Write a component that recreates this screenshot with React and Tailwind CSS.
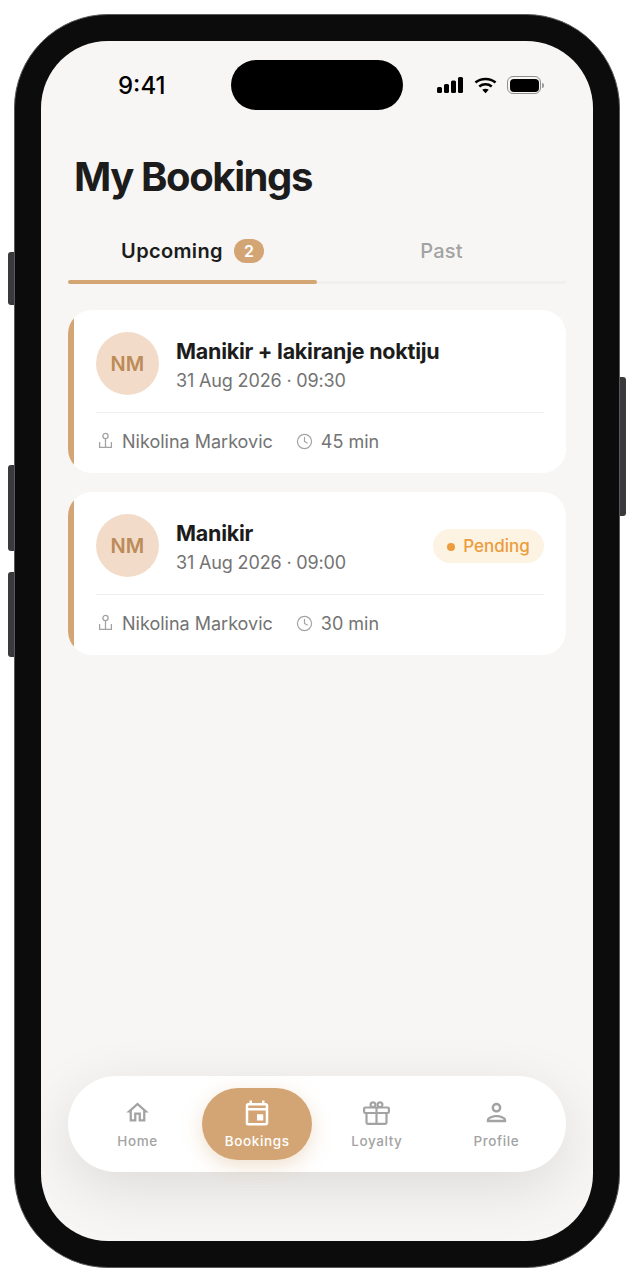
import React from "react";
import { MdOutlineEvent, MdOutlineHome, MdOutlinePerson } from "react-icons/md";
import { Clock } from "lucide-react";

const bookings = [
  { id: 1, title: "Manikir + lakiranje noktiju", when: "31 Aug 2026 · 09:30", length: "45 min" },
  { id: 2, title: "Manikir", when: "31 Aug 2026 · 09:00", length: "30 min", pending: true },
];

const GiftIcon = () => (
  <svg viewBox="0 0 27 24" className="h-[24px] w-[27px]" fill="none" stroke="currentColor" strokeWidth="2.2">
    <rect x="1.100" y="6.500" width="24.800" height="5.500" rx="1.200" />
    <path d="M3.500 12v9.600a1.300 1.300 0 0 0 1.300 1.300h17.400a1.300 1.300 0 0 0 1.300-1.300V12" />
    <path d="M13.500 6.500v16.400" />
    <circle cx="10" cy="3.800" r="2.400" />
    <circle cx="17" cy="3.800" r="2.400" />
  </svg>
);

const StaffIcon = () => (
  <svg viewBox="0 0 18 18" className="h-[18px] w-[18px] text-[#a3a3a3]" fill="none" stroke="currentColor" strokeWidth="1.3">
    <circle cx="9.500" cy="4" r="2.600" />
    <path d="M9.500 6.600v8.900M3.600 10v5.400h11.800V10" />
  </svg>
);

const StatusIcons = () => (
  <div className="flex items-center gap-[10px]">
    <svg viewBox="0 0 27 16" className="h-[16px] w-[27px]" fill="#000">
      <rect x="0" y="10" width="5" height="6" rx="1.500" />
      <rect x="7" y="7" width="5" height="9" rx="1.500" />
      <rect x="14" y="3.500" width="5" height="12.500" rx="1.500" />
      <rect x="21" y="0" width="5" height="16" rx="1.500" />
    </svg>
    <svg viewBox="0 0 24 18" className="h-[18px] w-[23px]" fill="none" stroke="#000" strokeWidth="2.700">
      <path d="M1.500 6.500c6-5 15-5 21 0" />
      <path d="M5.500 10.500c3.800-3 9.200-3 13 0" />
      <path d="M12 17.500l-3.400-3.600c2-1.400 4.800-1.400 6.800 0z" fill="#000" stroke="none" />
    </svg>
    <div className="relative flex h-[18px] w-[34px] items-center justify-center rounded-[6px] border border-[#8f8f8f] p-[1.500px]">
      <div className="h-full w-full rounded-[4px] bg-black" />
      <div className="absolute right-[-4px] h-[5px] w-[2px] rounded-r-sm bg-[#9a9a9a]" />
    </div>
  </div>
);

const BookingCard = ({ title, when, length, pending }) => (
  <div className="flex h-[163px] overflow-hidden rounded-[24px] bg-white">
    <div className="w-[6px] shrink-0 bg-[#d4a574]" />
    <div className="min-w-0 flex-1 px-[22px] pt-[22px]">
      <div className="flex h-[63px] items-center">
        <div className="flex h-[63px] w-[63px] shrink-0 items-center justify-center rounded-full bg-[#f2dcc9] text-[20px] font-semibold tracking-[0.3px] text-[#bc8b58]">
          NM
        </div>
        <div className="ml-[17px] min-w-0 flex-1 pt-[2px]">
          <div className="text-[21.500px] leading-[30px] font-bold tracking-[-0.25px] text-[#1c1c1c]">{title}</div>
          <div className="mt-[2px] text-[18px] leading-[25px] tracking-[-0.15px] text-[#737373]">{when}</div>
        </div>
        {pending && (
          <div className="mt-[1px] flex h-[34px] w-[111px] items-center justify-center gap-[8px] rounded-full bg-[#fdf3e3] pt-[1px] text-[17px] font-medium text-[#ec9c3c]">
            <span className="h-[8px] w-[8px] rounded-full bg-[#ec9c3c]" />
            Pending
          </div>
        )}
      </div>
      <div className="mt-[17px] h-[1px] bg-[#efeeec]" />
      <div className="mt-[16px] flex h-[24px] items-center text-[18px] text-[#737373]">
        <StaffIcon />
        <span className="ml-[8px]">Nikolina Markovic</span>
        <Clock size={17} strokeWidth={1.700} className="ml-[23px] text-[#a3a3a3]" />
        <span className="ml-[8px]">{length}</span>
      </div>
    </div>
  </div>
);

const NavItem = ({ icon, label, active }) => (
  <div
    className={
      "flex h-[72px] flex-col items-center justify-center rounded-[36px] " +
      (active ? "bg-[#d4a574] text-white shadow-[0_6px_20px_rgba(212,165,116,0.35)]" : "text-[#a3a3a3]")
    }
  >
    <div className="flex h-[28px] items-center">{icon}</div>
    <span className="mt-[5px] text-[13.500px] leading-[18px] font-medium tracking-[0.6px]">{label}</span>
  </div>
);

export default function App() {
  return (
    <div className="flex h-[1282px] w-[634px] items-center justify-center bg-white font-['Inter',sans-serif]">
      <div className="relative h-[1254px] w-[606px] rounded-[94px] border border-[#5a5a5e] bg-[#0c0c0c]">
        {/* side buttons */}
        <div className="absolute left-[-7px] top-[237px] h-[53px] w-[6px] rounded-l-[3px] bg-[#3a3a3c]" />
        <div className="absolute left-[-7px] top-[450px] h-[86px] w-[6px] rounded-l-[3px] bg-[#3a3a3c]" />
        <div className="absolute left-[-7px] top-[557px] h-[85px] w-[6px] rounded-l-[3px] bg-[#3a3a3c]" />
        <div className="absolute right-[-7px] top-[362px] h-[139px] w-[6px] rounded-r-[3px] bg-[#3a3a3c]" />

        <div className="absolute inset-[26px] flex flex-col overflow-hidden rounded-[67px] bg-[#f7f6f4] px-[27px]">
          <div className="absolute left-[190px] top-[19px] h-[50px] w-[172px] rounded-full bg-black" />

          {/* status bar */}
          <div className="flex h-[90px] items-start justify-between pl-[50px] pr-[25px] pt-[28px]">
            <span className="text-[24px] leading-[34px] font-medium text-black">9:41</span>
            <div className="pt-[7px]">
              <StatusIcons />
            </div>
          </div>

          <h1 className="ml-[6px] mt-[22px] text-[40px] leading-[48px] font-bold tracking-[-1.4px] text-[#1c1c1c]">
            My Bookings
          </h1>

          {/* tabs */}
          <div className="mt-[33px] grid grid-cols-2 border-b-[3px] border-[#f1f0ee]">
            <div className="relative flex h-[47px] items-center justify-center gap-[11px] pb-[14px]">
              <span className="text-[20px] font-semibold tracking-[0.35px] text-[#1c1c1c]">Upcoming</span>
              <span className="flex h-[24px] w-[30px] items-center justify-center rounded-full bg-[#d4a574] text-[16px] font-semibold text-white">
                2
              </span>
              <div className="absolute bottom-[-3px] left-0 right-0 h-[4px] rounded-full bg-[#d4a574]" />
            </div>
            <div className="flex h-[47px] items-center justify-center pb-[14px] text-[20px] font-medium tracking-[0.2px] text-[#a3a3a3]">
              Past
            </div>
          </div>

          <div className="mt-[26px] flex flex-col gap-[19px]">
            {bookings.map((b) => (
              <BookingCard key={b.id} {...b} />
            ))}
          </div>

          {/* bottom navigation */}
          <div className="mb-[69px] mt-auto grid h-[96px] grid-cols-4 items-center gap-[9.500px] rounded-[48px] bg-white px-[14.500px] shadow-[0_16px_60px_rgba(0,0,0,0.11)]">
            <NavItem icon={<MdOutlineHome size={27} />} label="Home" />
            <NavItem icon={<MdOutlineEvent size={30} />} label="Bookings" active />
            <NavItem icon={<GiftIcon />} label="Loyalty" />
            <NavItem icon={<MdOutlinePerson size={29} />} label="Profile" />
          </div>
        </div>
      </div>
    </div>
  );
}
